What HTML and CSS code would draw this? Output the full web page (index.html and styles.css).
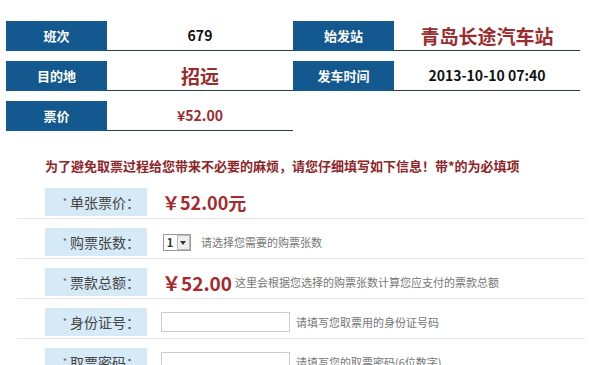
FILE: index.html
```html
<!DOCTYPE html>
<html lang="zh-CN">
<head>
  <meta charset="UTF-8" />
  <title>购票信息</title>
  <link rel="stylesheet" href="styles.css">
</head>
<body>

<!-- Ticket summary -->
<div class="summary">
  <div class="sum-row">
    <div class="sum-label">班次</div>
    <div class="sum-value">679</div>
    <div class="sum-label">始发站</div>
    <div class="sum-value red big">青岛长途汽车站</div>
  </div>
  <div class="sum-row">
    <div class="sum-label">目的地</div>
    <div class="sum-value red big">招远</div>
    <div class="sum-label">发车时间</div>
    <div class="sum-value">2013-10-10 07:40</div>
  </div>
  <div class="sum-row">
    <div class="sum-label">票价</div>
    <div class="sum-value red">¥52.00</div>
  </div>
</div>

<p class="notice">为了避免取票过程给您带来不必要的麻烦，请您仔细填写如下信息！带*的为必填项</p>

<!-- Order form -->
<div class="form">
  <div class="form-row">
    <div class="form-label"><span class="star">*</span>单张票价：</div>
    <div class="price">￥52.00元</div>
  </div>
  <div class="form-row">
    <div class="form-label"><span class="star">*</span>购票张数：</div>
    <div class="select"><span class="select-num">1</span><span class="select-btn"></span></div>
    <span class="hint">请选择您需要的购票张数</span>
  </div>
  <div class="form-row">
    <div class="form-label"><span class="star">*</span>票款总额：</div>
    <div class="price total">￥52.00</div>
    <span class="hint">这里会根据您选择的购票张数计算您应支付的票款总额</span>
  </div>
  <div class="form-row">
    <div class="form-label"><span class="star">*</span>身份证号：</div>
    <input class="text-input" type="text">
    <span class="hint">请填写您取票用的身份证号码</span>
  </div>
  <div class="form-row">
    <div class="form-label"><span class="star">*</span>取票密码：</div>
    <input class="text-input" type="text">
    <span class="hint">请填写您的取票密码(6位数字)</span>
  </div>
</div>

</body>
</html>
```

FILE: styles.css
```css
/* Global styles */
body {
  margin: 0;
  font-family: "Noto Sans CJK SC", "Noto Sans", sans-serif;
  background-color: #fff;
  color: #333;
  overflow: hidden;
}

/* Ticket summary */
.summary {
  padding: 21px 0 0 6px;
}

.sum-row {
  display: flex;
  margin-bottom: 10px;
}

.sum-label {
  width: 101px;
  height: 30px;
  line-height: 30px;
  background-color: #13598f;
  color: #fff;
  font-size: 13px;
  font-weight: bold;
  text-align: center;
}

.sum-value {
  width: 186px;
  height: 29px;
  line-height: 29px;
  border-bottom: 1px solid #2d3b48;
  font-size: 14px;
  font-weight: bold;
  color: #111;
  text-align: center;
}

.sum-value.red {
  color: #9a2b2e;
}

.sum-value.big {
  font-size: 19px;
}

/* Notice */
.notice {
  margin: 26px 0 0 45px;
  font-size: 13px;
  font-weight: bold;
  color: #8e2528;
  line-height: 18px;
}

/* Order form */
.form {
  margin: 13px 0 0 17px;
  width: 568px;
}

.form-row {
  display: flex;
  align-items: center;
  padding: 0 0 2px 28px;
  margin-bottom: 9px;
  border-bottom: 1px solid #e6e6e6;
}

.form-label {
  width: 102px;
  height: 28px;
  line-height: 28px;
  padding-right: 7px;
  box-sizing: border-box;
  background-color: #d5e9f6;
  font-size: 14px;
  color: #444;
  text-align: right;
  margin-right: 15px;
  flex-shrink: 0;
}

.star {
  font-size: 9px;
  color: #666;
  vertical-align: top;
  margin-right: 3px;
}

.price {
  font-size: 18px;
  font-weight: bold;
  color: #a52a2d;
}

.price.total {
  font-size: 19px;
  margin-right: 3px;
}

.select {
  display: flex;
  align-items: center;
  height: 15px;
  border: 1px solid #999;
  margin-left: 1px;
  margin-right: 10px;
}

.select-num {
  width: 12px;
  font-size: 11px;
  font-weight: bold;
  text-align: center;
  line-height: 15px;
}

.select-btn {
  position: relative;
  width: 11px;
  height: 13px;
  border: 1px solid #bbb;
  background-color: #eee;
  margin-left: 1px;
}

.select-btn::after {
  content: "";
  position: absolute;
  left: 2px;
  top: 5px;
  border-left: 3px solid transparent;
  border-right: 3px solid transparent;
  border-top: 4px solid #333;
}

.hint {
  font-size: 11px;
  color: #777;
}

.text-input {
  width: 129px;
  height: 20px;
  box-sizing: border-box;
  border: 1px solid #ccc;
  margin: 0 6px 0 -1px;
  padding: 0;
}
```
